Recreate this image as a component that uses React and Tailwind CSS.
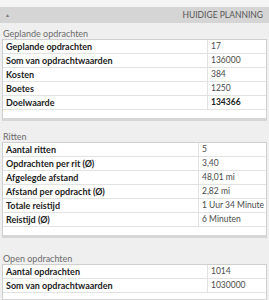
import React from 'react';

const sections = [
  {
    title: 'Geplande opdrachten',
    gap: 'h-[16px]',
    labelW: 'w-[205px]',
    filler: 'h-[8px]',
    rows: [
      ['Geplande opdrachten', '17'],
      ['Som van opdrachtwaarden', '136000'],
      ['Kosten', '384'],
      ['Boetes', '1250'],
      ['Doelwaarde', '134366', true],
    ],
  },
  {
    title: 'Ritten',
    gap: 'h-[21px]',
    labelW: 'w-[196px]',
    filler: 'h-[8px]',
    rows: [
      ['Aantal ritten', '5'],
      ['Opdrachten per rit (Ø)', '3,40'],
      ['Afgelegde afstand', '48,01 mi'],
      ['Afstand per opdracht (Ø)', '2,82 mi'],
      ['Totale reistijd', '1 Uur 34 Minute'],
      ['Reistijd (Ø)', '6 Minuten'],
    ],
  },
  {
    title: 'Open opdrachten',
    gap: 'h-[26px]',
    labelW: 'w-[205px]',
    filler: 'h-[6px]',
    rows: [
      ['Aantal opdrachten', '1014'],
      ['Som van opdrachtwaarden', '1030000'],
    ],
  },
];

const Row = ({ label, value, labelW, strong }) => (
  <div className="flex h-[14px] border-b border-[#e2e2e2]">
    <div className={`${labelW} shrink-0 flex items-center pl-[3px] font-bold text-[#1c1c1c] border-r border-[#e2e2e2]`}>
      {label}
    </div>
    <div className={`flex items-center pl-[3px] whitespace-nowrap text-[8.5px] ${strong ? 'font-bold text-[#222]' : 'text-[#4a4a4a]'}`}>
      {value}
    </div>
  </div>
);

const Section = ({ section }) => (
  <div>
    <div className={`${section.gap} flex items-end pl-[3px] pb-[1px] text-[#6b6b6b]`}>
      {section.title}
    </div>
    <div className="ml-[2px] mr-[2px] bg-white border border-[#cfcfcf] border-b-[3px] border-b-[#d6d6d6]">
      {section.rows.map(([label, value, strong]) => (
        <Row key={label} label={label} value={value} labelW={section.labelW} strong={strong} />
      ))}
      <div className={section.filler} />
    </div>
  </div>
);

export default function App() {
  return (
    <div className="w-[269px] h-[300px] overflow-hidden bg-[#efefef] font-['Lato','Liberation_Sans',sans-serif] text-[9px] leading-none">
      <div className="h-[7px] bg-[#f4f4f4]" />
      <div className="h-[16px] bg-[#d5d5d5] flex items-center justify-between pl-[5px] pr-[6px]">
        <span className="text-[5px] text-[#7a7a7a]">▲</span>
        <span className="text-[8.5px] text-[#555]">HUIDIGE PLANNING</span>
      </div>
      {sections.map((s) => (
        <Section key={s.title} section={s} />
      ))}
    </div>
  );
}
